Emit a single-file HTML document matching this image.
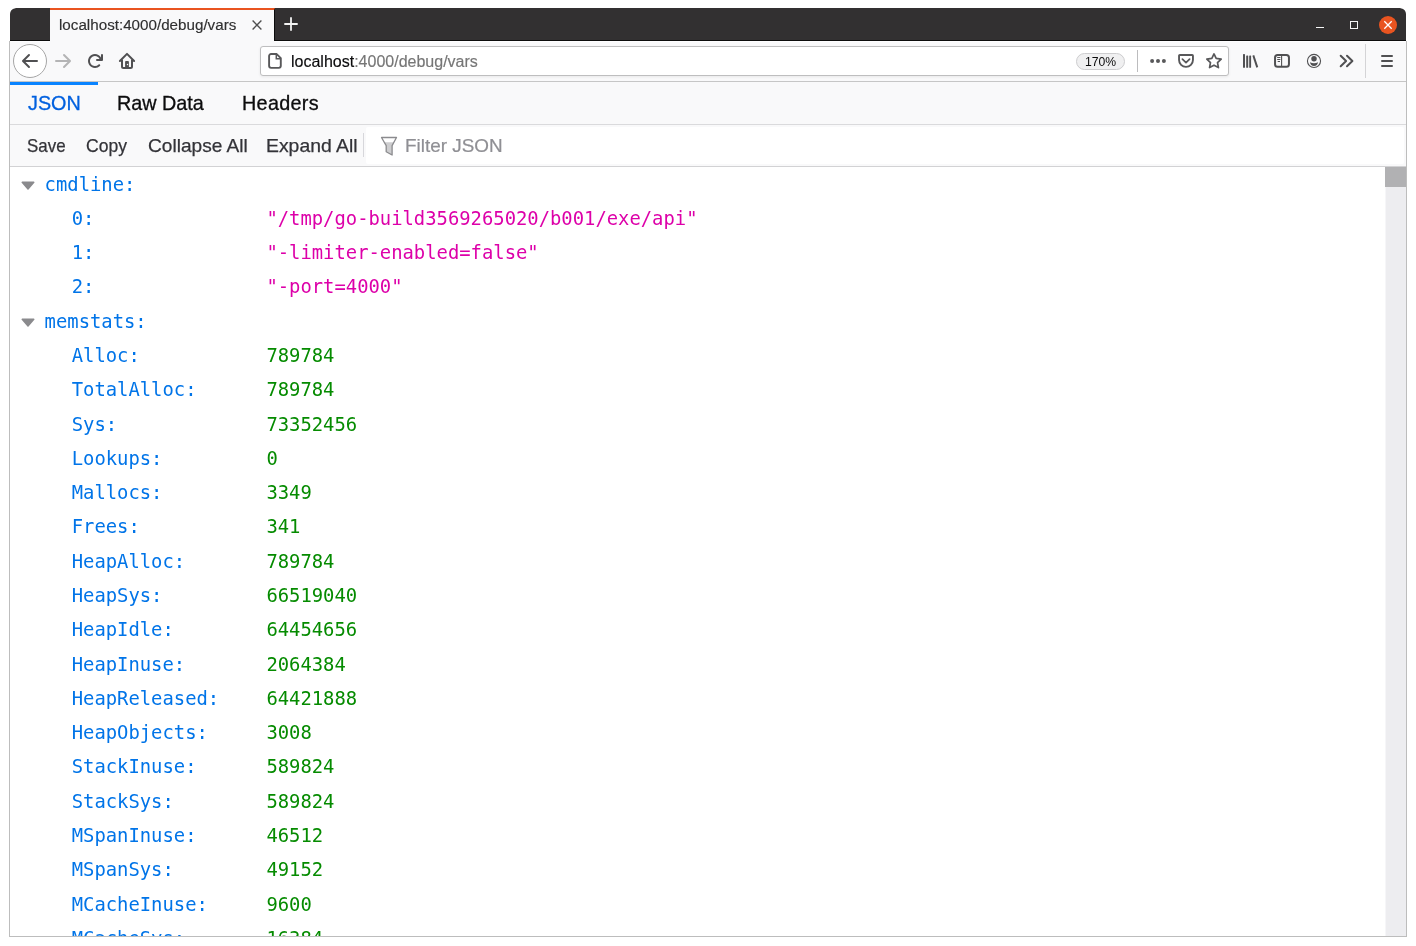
<!DOCTYPE html>
<html lang="en">
<head>
<meta charset="utf-8">
<title>localhost:4000/debug/vars</title>
<style>
*{box-sizing:border-box;margin:0;padding:0}
html,body{width:1416px;height:946px;overflow:hidden;background:#fff}
body{position:relative;font-family:"Liberation Sans",sans-serif;color:#0c0c0d}
.abs{position:absolute}
#win{position:absolute;left:9px;top:8px;width:1398px;height:929px;overflow:hidden;background:#fff;border-radius:7px 7px 0 0}
#inner{will-change:transform;position:absolute;left:-9px;top:-8px;width:1416px;height:946px}
#frame{position:absolute;left:9px;top:41px;width:1398px;height:896px;border:1px solid #bdbdbd;border-top:none;pointer-events:none}
/* title / tab bar */
#tabbar{position:absolute;left:10px;top:8px;width:1396px;height:33px;background:#323031;border-bottom:1px solid #0c0c0c;border-radius:6px 6px 0 0}
#tab{position:absolute;left:50px;top:8px;width:225px;height:33px;background:#f9f9fa;border-top:2px solid #e95420;border-right:1px solid #0c0c0c}
#tabtitle{-webkit-text-stroke:.15px currentColor;position:absolute;left:59px;top:15px;font-size:15.2px;line-height:19px;white-space:nowrap;color:#303030}
/* nav bar */
#nav{position:absolute;left:10px;top:41px;width:1396px;height:41px;background:#f9f9fa;border-bottom:1px solid #c6c6c6}
#back{position:absolute;left:13px;top:44px;width:34px;height:34px;border:1px solid #a6a6a6;border-radius:50%;background:#fff}
#urlbar{position:absolute;left:260px;top:46px;width:969px;height:30px;border:1px solid #bebebf;border-radius:3px;background:#fff;box-shadow:0 1px 3px rgba(0,0,0,.07)}
#urltext{-webkit-text-stroke:.15px currentColor;position:absolute;left:291px;top:52px;font-size:16px;line-height:20px;white-space:nowrap;color:#767676}
#urltext b{font-weight:normal;color:#0c0c0d}
#zoom{position:absolute;left:1076px;top:53px;width:49px;height:17px;border:1px solid #cdcdcf;border-radius:9px;background:#f0f0f1;font-size:12.2px;line-height:16.6px;text-align:center;color:#0c0c0d}
.vsep{position:absolute;width:1px;background:#c8c8ca}
svg{position:absolute;overflow:visible}
/* json viewer */
#jtabs{position:absolute;left:10px;top:82px;width:1396px;height:43px;background:#f9f9fa;border-bottom:1px solid #dadadc}
#jline{position:absolute;left:10px;top:82px;width:88px;height:3.4px;background:#0a84ff}
.jt{-webkit-text-stroke:.3px currentColor;position:absolute;top:91px;font-size:19.8px;line-height:24px;white-space:nowrap;color:#0c0c0d}
#jtool{position:absolute;left:10px;top:125px;width:1396px;height:42px;background:#f9f9fa;border-bottom:1px solid #d2d2d4}
.tb{-webkit-text-stroke:.25px currentColor;position:absolute;top:135px;font-size:18.2px;line-height:22px;white-space:nowrap;color:#333338;transform-origin:0 50%}
#filter{position:absolute;left:366px;top:127px;width:1038px;height:37px;background:#fff;border-radius:2px}
#ftext{-webkit-text-stroke:.2px currentColor;position:absolute;left:405px;top:135px;font-size:18.2px;line-height:22px;white-space:nowrap;color:#8f8f94;transform:scaleX(1.038);transform-origin:0 50%}
/* tree */
#tree{position:absolute;left:10px;top:167px;width:1375px;height:769px;overflow:hidden;font-family:"DejaVu Sans Mono","Liberation Mono",monospace;font-size:18.857px}
.r{position:absolute;left:0;width:1375px;height:34.286px;line-height:34.286px;white-space:nowrap}
.k{position:absolute;color:#0074e8}
.k0{left:34.600px}
.k1{left:61.700px}
.v{position:absolute;left:256.400px}
.s{color:#dd00a9}
.n{color:#058b00}
.tw{position:absolute;left:11.100px;top:13px;width:14px;height:9.300px}
#sbar{position:absolute;left:1385px;top:167px;width:21px;height:769px;background:#ededf0;border-left:1px solid #f6f6f8}
#thumb{position:absolute;left:1385px;top:167px;width:21px;height:20px;background:#b1b1b3}
</style>
</head>
<body>
<div id="win"><div id="inner">
<div id="tabbar"></div>
<div id="tab"></div>
<div id="tabtitle">localhost:4000/debug/vars</div>
<svg style="left:252px;top:20px" width="10" height="10" viewBox="0 0 10 10"><path d="M.6.6l8.8 8.8M9.4.6L.6 9.4" stroke="#4f4f4f" stroke-width="1.35" fill="none"/></svg>
<svg style="left:284px;top:17px" width="14" height="14" viewBox="0 0 14 14"><path d="M7 .3v13.4M.3 7h13.4" stroke="#f4f4f4" stroke-width="1.8" fill="none"/></svg>
<div class="abs" style="left:1316px;top:27px;width:8px;height:1.4px;background:#f6f6f6"></div>
<div class="abs" style="left:1350px;top:21px;width:8px;height:8px;border:1px solid #f6f6f6"></div>
<div class="abs" style="left:1379px;top:15.8px;width:18.3px;height:18.3px;border-radius:50%;background:#e95420"></div>
<svg style="left:1384px;top:21px" width="8" height="8" viewBox="0 0 8 8"><path d="M.3.3l7.4 7.4M7.700.3L.3 7.700" stroke="#fff" stroke-width="1.3" fill="none"/></svg>
<div id="nav"></div>
<div class="abs" style="left:10px;top:41px;width:40px;height:1px;background:#fdfdfe"></div>
<div class="abs" style="left:275px;top:41px;width:1131px;height:1px;background:#fdfdfe"></div>
<div id="back"></div>
<svg style="left:22px;top:53px" width="16" height="16" viewBox="0 0 16 16"><path fill="#505052" d="M15 7H3.414l4.293-4.293a1 1 0 0 0-1.414-1.414l-6 6a1 1 0 0 0 0 1.414l6 6a1 1 0 0 0 1.414-1.414L3.414 9H15a1 1 0 0 0 0-2z"/></svg>
<svg style="left:55px;top:53px" width="16" height="16" viewBox="0 0 16 16"><path fill="#b4b4b5" d="M1 7h11.586L8.293 2.707a1 1 0 0 1 1.414-1.414l6 6a1 1 0 0 1 0 1.414l-6 6a1 1 0 0 1-1.414-1.414L12.586 9H1a1 1 0 0 1 0-2z"/></svg>
<svg style="left:87px;top:53px" width="16" height="16" viewBox="0 0 16 16"><path fill="#505052" d="M15 1a1 1 0 0 0-1 1v2.418A6.995 6.995 0 1 0 8 15a6.954 6.954 0 0 0 4.950-2.050 1 1 0 0 0-1.414-1.414A5.019 5.019 0 1 1 12.549 6H10a1 1 0 0 0 0 2h5a1 1 0 0 0 1-1V2a1 1 0 0 0-1-1z"/></svg>
<svg style="left:119px;top:53px" width="16" height="16" viewBox="0 0 16 16"><path d="M.900 8L8 .900 15.100 8" fill="none" stroke="#505052" stroke-width="2" stroke-linecap="round" stroke-linejoin="round"/><path d="M3 6.500v7a1.500 1.500 0 0 0 1.500 1.500h7a1.500 1.500 0 0 0 1.500-1.500v-7" fill="none" stroke="#505052" stroke-width="2"/><path fill="#505052" fill-rule="evenodd" d="M6.100 14.500V8.900a.800.800 0 0 1 .800-.800h2.200a.800.800 0 0 1 .800.800v5.600zM8.500 10.800a.700.700 0 1 0 0 1.400.700.700 0 0 0 0-1.400z"/></svg>
<div id="urlbar"></div>
<svg style="left:267px;top:53px" width="16" height="16" viewBox="0 0 16 16"><path d="M4.100 1.050h5.600l4.100 4.100v7.700a2 2 0 0 1-2 2H4.100a2 2 0 0 1-2-2v-9.800a2 2 0 0 1 2-2z" fill="none" stroke="#58585a" stroke-width="1.9" stroke-linejoin="round"/><path d="M9.300 1.400v4.300h4.300" fill="none" stroke="#58585a" stroke-width="1.5"/></svg>
<div id="urltext"><b>localhost</b>:4000/debug/vars</div>
<div id="zoom">170%</div>
<div class="vsep" style="left:1137px;top:50px;height:22px;background:#bcbcbe"></div>
<svg style="left:1150px;top:53px" width="16" height="16" viewBox="0 0 16 16"><g fill="#58585a"><circle cx="2.100" cy="7.900" r="2"/><circle cx="8" cy="7.900" r="2"/><circle cx="13.900" cy="7.900" r="2"/></g></svg>
<svg style="left:1178px;top:53px" width="16" height="16" viewBox="0 0 16 16"><path d="M1.850 1.950h12.300a.800.800 0 0 1 .800.800V7a6.950 6.850 0 0 1-13.900 0V2.750a.800.800 0 0 1 .800-.800z" fill="none" stroke="#58585a" stroke-width="1.900"/><path d="M4.400 6.100l3.600 3.600 3.600-3.600" fill="none" stroke="#58585a" stroke-width="1.700" stroke-linecap="round" stroke-linejoin="round"/></svg>
<svg style="left:1206px;top:53px" width="16" height="16" viewBox="0 0 16 16"><path d="M8.00 0.90 L10.17 5.46 L15.18 6.12 L11.52 9.59 L12.44 14.56 L8.00 12.15 L3.56 14.56 L4.48 9.59 L0.82 6.12 L5.83 5.46z" fill="none" stroke="#58585a" stroke-width="1.700" stroke-linejoin="round"/></svg>
<svg style="left:1242px;top:53px" width="16" height="16" viewBox="0 0 16 16"><g fill="#505052"><rect x="1" y="1" width="2" height="13.800" rx=".6"/><rect x="4.200" y="2.400" width="2" height="12.400" rx=".6"/><rect x="7.200" y="2.400" width="1.900" height="12.400" rx=".6"/><path d="M10.400 2.800l1.800-.700 4 12-1.900.700z"/></g></svg>
<svg style="left:1274px;top:53px" width="16" height="16" viewBox="0 0 16 16"><rect x="1.050" y="2" width="13.900" height="11.800" rx="2.600" fill="none" stroke="#505052" stroke-width="2"/><path d="M7.600 2.500v11" stroke="#505052" stroke-width="1.100"/><path d="M3.200 4.500h3.200M3.200 6.500h3.200M3.700 8.500h2.300" stroke="#505052" stroke-width="1"/></svg>
<svg style="left:1306px;top:53px" width="16" height="16" viewBox="0 0 16 16"><circle cx="8" cy="7.900" r="6.550" fill="none" stroke="#505052" stroke-width="1.100"/><circle cx="8" cy="5.700" r="2.750" fill="#505052"/><path d="M4 9.300Q8 11.300 12 9.300Q11.500 12.900 8 12.900Q4.500 12.900 4 9.300z" fill="#505052"/></svg>
<svg style="left:1339px;top:53px" width="16" height="16" viewBox="0 0 16 16"><path d="M1.700 2.800l5.400 5.200-5.400 5.200M8 2.800l5.400 5.200L8 13.200" fill="none" stroke="#505052" stroke-width="2" stroke-linecap="round" stroke-linejoin="round"/></svg>
<div class="vsep" style="left:1365px;top:44px;height:34px;background:#d4d4d6"></div>
<div class="abs" style="left:1381px;top:55px;width:12px;height:2px;background:#505052;border-radius:1px"></div>
<div class="abs" style="left:1381px;top:60px;width:12px;height:2px;background:#505052;border-radius:1px"></div>
<div class="abs" style="left:1381px;top:65px;width:12px;height:2px;background:#505052;border-radius:1px"></div>
<div id="jtabs"></div>
<div id="jline"></div>
<div class="jt" style="left:28px;color:#0060df">JSON</div>
<div class="jt" style="left:117px">Raw Data</div>
<div class="jt" style="left:242px;letter-spacing:.3px">Headers</div>
<div id="jtool"></div>
<div class="tb" style="left:27px;transform:scaleX(.93)">Save</div>
<div class="tb" style="left:85.500px;transform:scaleX(.965)">Copy</div>
<div class="tb" style="left:147.500px;transform:scaleX(1.050)">Collapse All</div>
<div class="tb" style="left:266px;transform:scaleX(1.065)">Expand All</div>
<div class="vsep" style="left:363px;top:133px;height:24px;background:#d7d7db"></div>
<div id="filter"></div>
<svg style="left:380px;top:136px" width="18" height="20" viewBox="0 0 18 20"><path d="M1.500 1.500h15l-4.400 8.100v9.400l-5.900-3.200v-6.200z" fill="#fff"/><path d="M4.100 6.300h9.800l-1.800 3.300v9.400l-5.900-3.200v-6.200z" fill="#cdcdcf"/><path d="M1.500 1.500h15l-4.400 8.100v9.400l-5.900-3.200v-6.200z" fill="none" stroke="#8b8b8e" stroke-width="1.300" stroke-linejoin="round"/></svg>
<div id="ftext">Filter JSON</div>
<div id="tree">
<div class="r" style="top:0.55px"><svg class="tw" viewBox="0 0 14 9" preserveAspectRatio="none"><path d="M1.2 0.6h11.6a.7.7 0 0 1 .55 1.15l-5.8 6.4a.75.75 0 0 1-1.1 0l-5.8-6.4a.7.7 0 0 1 .55-1.15z" fill="#8a8a8d"/></svg><span class="k k0">cmdline:</span></div>
<div class="r" style="top:34.84px"><span class="k k1">0:</span><span class="v s">&quot;/tmp/go-build3569265020/b001/exe/api&quot;</span></div>
<div class="r" style="top:69.12px"><span class="k k1">1:</span><span class="v s">&quot;-limiter-enabled=false&quot;</span></div>
<div class="r" style="top:103.41px"><span class="k k1">2:</span><span class="v s">&quot;-port=4000&quot;</span></div>
<div class="r" style="top:137.69px"><svg class="tw" viewBox="0 0 14 9" preserveAspectRatio="none"><path d="M1.2 0.6h11.6a.7.7 0 0 1 .55 1.15l-5.8 6.4a.75.75 0 0 1-1.1 0l-5.8-6.4a.7.7 0 0 1 .55-1.15z" fill="#8a8a8d"/></svg><span class="k k0">memstats:</span></div>
<div class="r" style="top:171.98px"><span class="k k1">Alloc:</span><span class="v n">789784</span></div>
<div class="r" style="top:206.26px"><span class="k k1">TotalAlloc:</span><span class="v n">789784</span></div>
<div class="r" style="top:240.55px"><span class="k k1">Sys:</span><span class="v n">73352456</span></div>
<div class="r" style="top:274.84px"><span class="k k1">Lookups:</span><span class="v n">0</span></div>
<div class="r" style="top:309.12px"><span class="k k1">Mallocs:</span><span class="v n">3349</span></div>
<div class="r" style="top:343.41px"><span class="k k1">Frees:</span><span class="v n">341</span></div>
<div class="r" style="top:377.69px"><span class="k k1">HeapAlloc:</span><span class="v n">789784</span></div>
<div class="r" style="top:411.98px"><span class="k k1">HeapSys:</span><span class="v n">66519040</span></div>
<div class="r" style="top:446.26px"><span class="k k1">HeapIdle:</span><span class="v n">64454656</span></div>
<div class="r" style="top:480.55px"><span class="k k1">HeapInuse:</span><span class="v n">2064384</span></div>
<div class="r" style="top:514.84px"><span class="k k1">HeapReleased:</span><span class="v n">64421888</span></div>
<div class="r" style="top:549.12px"><span class="k k1">HeapObjects:</span><span class="v n">3008</span></div>
<div class="r" style="top:583.41px"><span class="k k1">StackInuse:</span><span class="v n">589824</span></div>
<div class="r" style="top:617.69px"><span class="k k1">StackSys:</span><span class="v n">589824</span></div>
<div class="r" style="top:651.98px"><span class="k k1">MSpanInuse:</span><span class="v n">46512</span></div>
<div class="r" style="top:686.26px"><span class="k k1">MSpanSys:</span><span class="v n">49152</span></div>
<div class="r" style="top:720.55px"><span class="k k1">MCacheInuse:</span><span class="v n">9600</span></div>
<div class="r" style="top:754.84px"><span class="k k1">MCacheSys:</span><span class="v n">16384</span></div>
</div>
<div id="sbar"></div>
<div id="thumb"></div>
<div id="frame"></div>
</div></div>
</body>
</html>
